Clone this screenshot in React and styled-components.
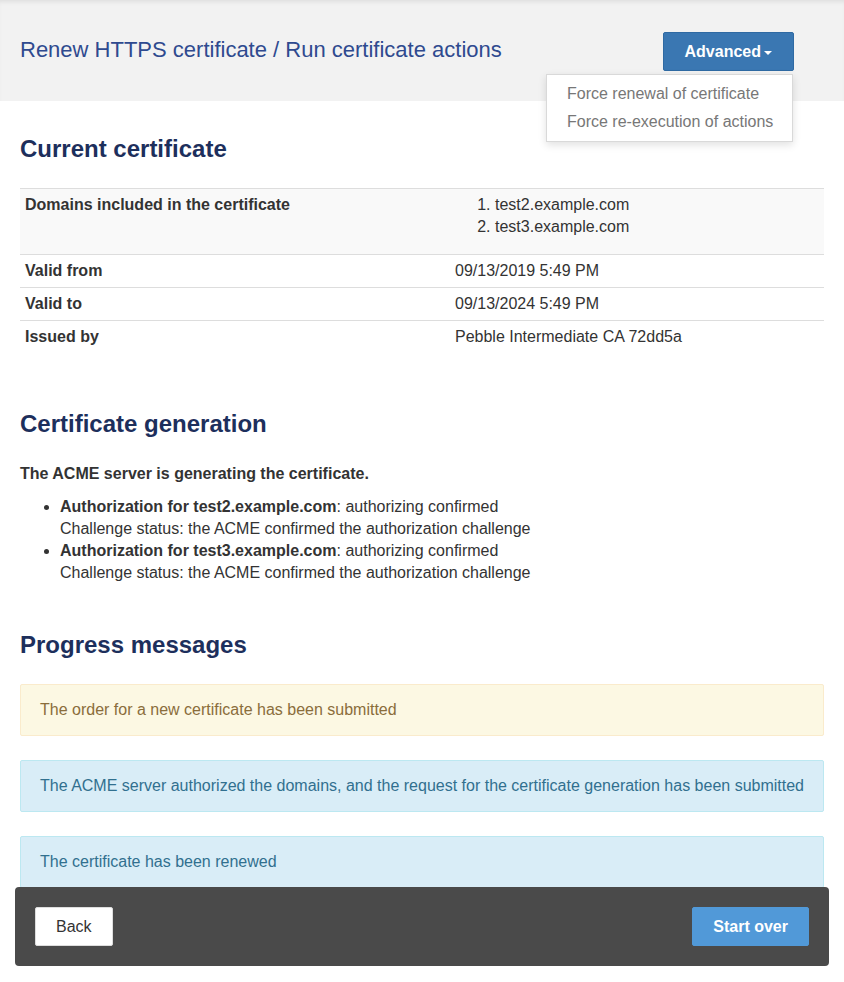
import styled, { createGlobalStyle } from "styled-components";

const Global = createGlobalStyle`
  body {
    margin: 0;
    background: #ffffff;
    font-family: "Liberation Sans", Arial, sans-serif;
    font-size: 16px;
    color: #333333;
  }
`;

const Header = styled.header`
  height: 101px;
  box-sizing: border-box;
  background: #f2f2f2;
  box-shadow: inset 0 4px 4px -2px rgba(0, 0, 0, 0.08);
  display: flex;
  align-items: center;
  justify-content: space-between;
  padding: 2px 50px 0 20px;
`;

const Title = styled.h1`
  margin: 0;
  font-size: 22px;
  font-weight: normal;
  color: #2f4a8f;
  line-height: 26px;
  padding-bottom: 3px;
`;

const DropWrap = styled.div`
  position: relative;
`;

const Button = styled.button`
  font-family: inherit;
  font-size: 16px;
  line-height: 21px;
  padding: 8px ${(p) => p.$px || 20}px;
  border-radius: 2px;
  border: 1px solid ${(p) => p.$border || p.$bg};
  background: ${(p) => p.$bg};
  color: ${(p) => p.$color};
  font-weight: ${(p) => (p.$bold ? "bold" : "normal")};
  display: flex;
  align-items: center;
  cursor: pointer;
`;

const Caret = styled.span`
  display: inline-block;
  margin-left: 3px;
  margin-top: 2px;
  border-top: 4px solid #ffffff;
  border-left: 4px solid transparent;
  border-right: 4px solid transparent;
`;

const Menu = styled.ul`
  position: absolute;
  right: 1px;
  top: calc(100% + 3px);
  width: 247px;
  box-sizing: border-box;
  margin: 0;
  padding: 5px 0;
  list-style: none;
  background: #ffffff;
  border: 1px solid rgba(0, 0, 0, 0.15);
  box-shadow: 0 3px 8px rgba(0, 0, 0, 0.12);
  z-index: 5;
`;

const MenuItem = styled.li`
  padding: 3px 20px;
  line-height: 22px;
  color: #777777;
  white-space: nowrap;
`;

const Main = styled.main`
  padding: 34px 20px 20px;
`;

const Section = styled.section`
  margin-top: ${(p) => p.$top || 0}px;
`;

const Heading = styled.h2`
  margin: 0 0 ${(p) => p.$gap || 24}px;
  font-size: 24px;
  line-height: 28px;
  font-weight: bold;
  color: #1d2f5c;
`;

const Table = styled.table`
  width: 100%;
  border-collapse: collapse;
`;

const Row = styled.tr`
  border-top: 1px solid #dddddd;
  background: ${(p) => (p.$striped ? "#f9f9f9" : "transparent")};
`;

const Label = styled.th`
  width: 420px;
  text-align: left;
  padding: 5px;
  line-height: 22px;
  vertical-align: top;
  font-weight: bold;
`;

const Value = styled.td`
  padding: 5px;
  line-height: 22px;
  vertical-align: top;
`;

const DomainList = styled.ol`
  margin: 0 0 11px;
  padding-left: 40px;
`;

const Lead = styled.p`
  margin: 0 0 11px;
  font-weight: bold;
  line-height: 22px;
`;

const Bullets = styled.ul`
  margin: 0;
  padding-left: 40px;
  line-height: 22px;
`;

const Alert = styled.div`
  padding: 14px 19px;
  line-height: 22px;
  border: 1px solid ${(p) => (p.$kind === "warning" ? "#faebcc" : "#bce8f1")};
  background: ${(p) => (p.$kind === "warning" ? "#fcf8e3" : "#d9edf7")};
  color: ${(p) => (p.$kind === "warning" ? "#8a6d3b" : "#31708f")};
  border-radius: 2px;
  & + & {
    margin-top: 24px;
  }
`;

const Footer = styled.footer`
  position: fixed;
  left: 15px;
  right: 15px;
  bottom: 16px;
  height: 79px;
  box-sizing: border-box;
  padding: 0 20px;
  background: #4a4a4a;
  border-radius: 4px;
  display: flex;
  align-items: center;
  justify-content: space-between;
`;

const rows = [
  ["Valid from", "09/13/2019 5:49 PM"],
  ["Valid to", "09/13/2024 5:49 PM"],
  ["Issued by", "Pebble Intermediate CA 72dd5a"],
];

const auths = ["test2.example.com", "test3.example.com"];

export default function App() {
  return (
    <>
      <Global />
      <Header>
        <Title>Renew HTTPS certificate / Run certificate actions</Title>
        <DropWrap>
          <Button $bg="#3a77b2" $border="#2f6aa3" $color="#ffffff" $bold $px={21}>
            Advanced
            <Caret />
          </Button>
          <Menu>
            <MenuItem>Force renewal of certificate</MenuItem>
            <MenuItem>Force re-execution of actions</MenuItem>
          </Menu>
        </DropWrap>
      </Header>
      <Main>
        <Section>
          <Heading $gap={25}>Current certificate</Heading>
          <Table>
            <tbody>
              <Row $striped>
                <Label>Domains included in the certificate</Label>
                <Value>
                  <DomainList>
                    <li>test2.example.com</li>
                    <li>test3.example.com</li>
                  </DomainList>
                </Value>
              </Row>
              {rows.map(([k, v]) => (
                <Row key={k}>
                  <Label>{k}</Label>
                  <Value>{v}</Value>
                </Row>
              ))}
            </tbody>
          </Table>
        </Section>
        <Section $top={57}>
          <Heading $gap={25}>Certificate generation</Heading>
          <Lead>The ACME server is generating the certificate.</Lead>
          <Bullets>
            {auths.map((d) => (
              <li key={d}>
                <b>Authorization for {d}</b>: authorizing confirmed
                <br />
                Challenge status: the ACME confirmed the authorization challenge
              </li>
            ))}
          </Bullets>
        </Section>
        <Section $top={47}>
          <Heading $gap={25}>Progress messages</Heading>
          <Alert $kind="warning">The order for a new certificate has been submitted</Alert>
          <Alert $kind="info">
            The ACME server authorized the domains, and the request for the certificate
            generation has been submitted
          </Alert>
          <Alert $kind="info">The certificate has been renewed</Alert>
        </Section>
      </Main>
      <Footer>
        <Button $bg="#ffffff" $border="#dddddd" $color="#333333">
          Back
        </Button>
        <Button $bg="#5199d8" $color="#ffffff" $bold>
          Start over
        </Button>
      </Footer>
    </>
  );
}
